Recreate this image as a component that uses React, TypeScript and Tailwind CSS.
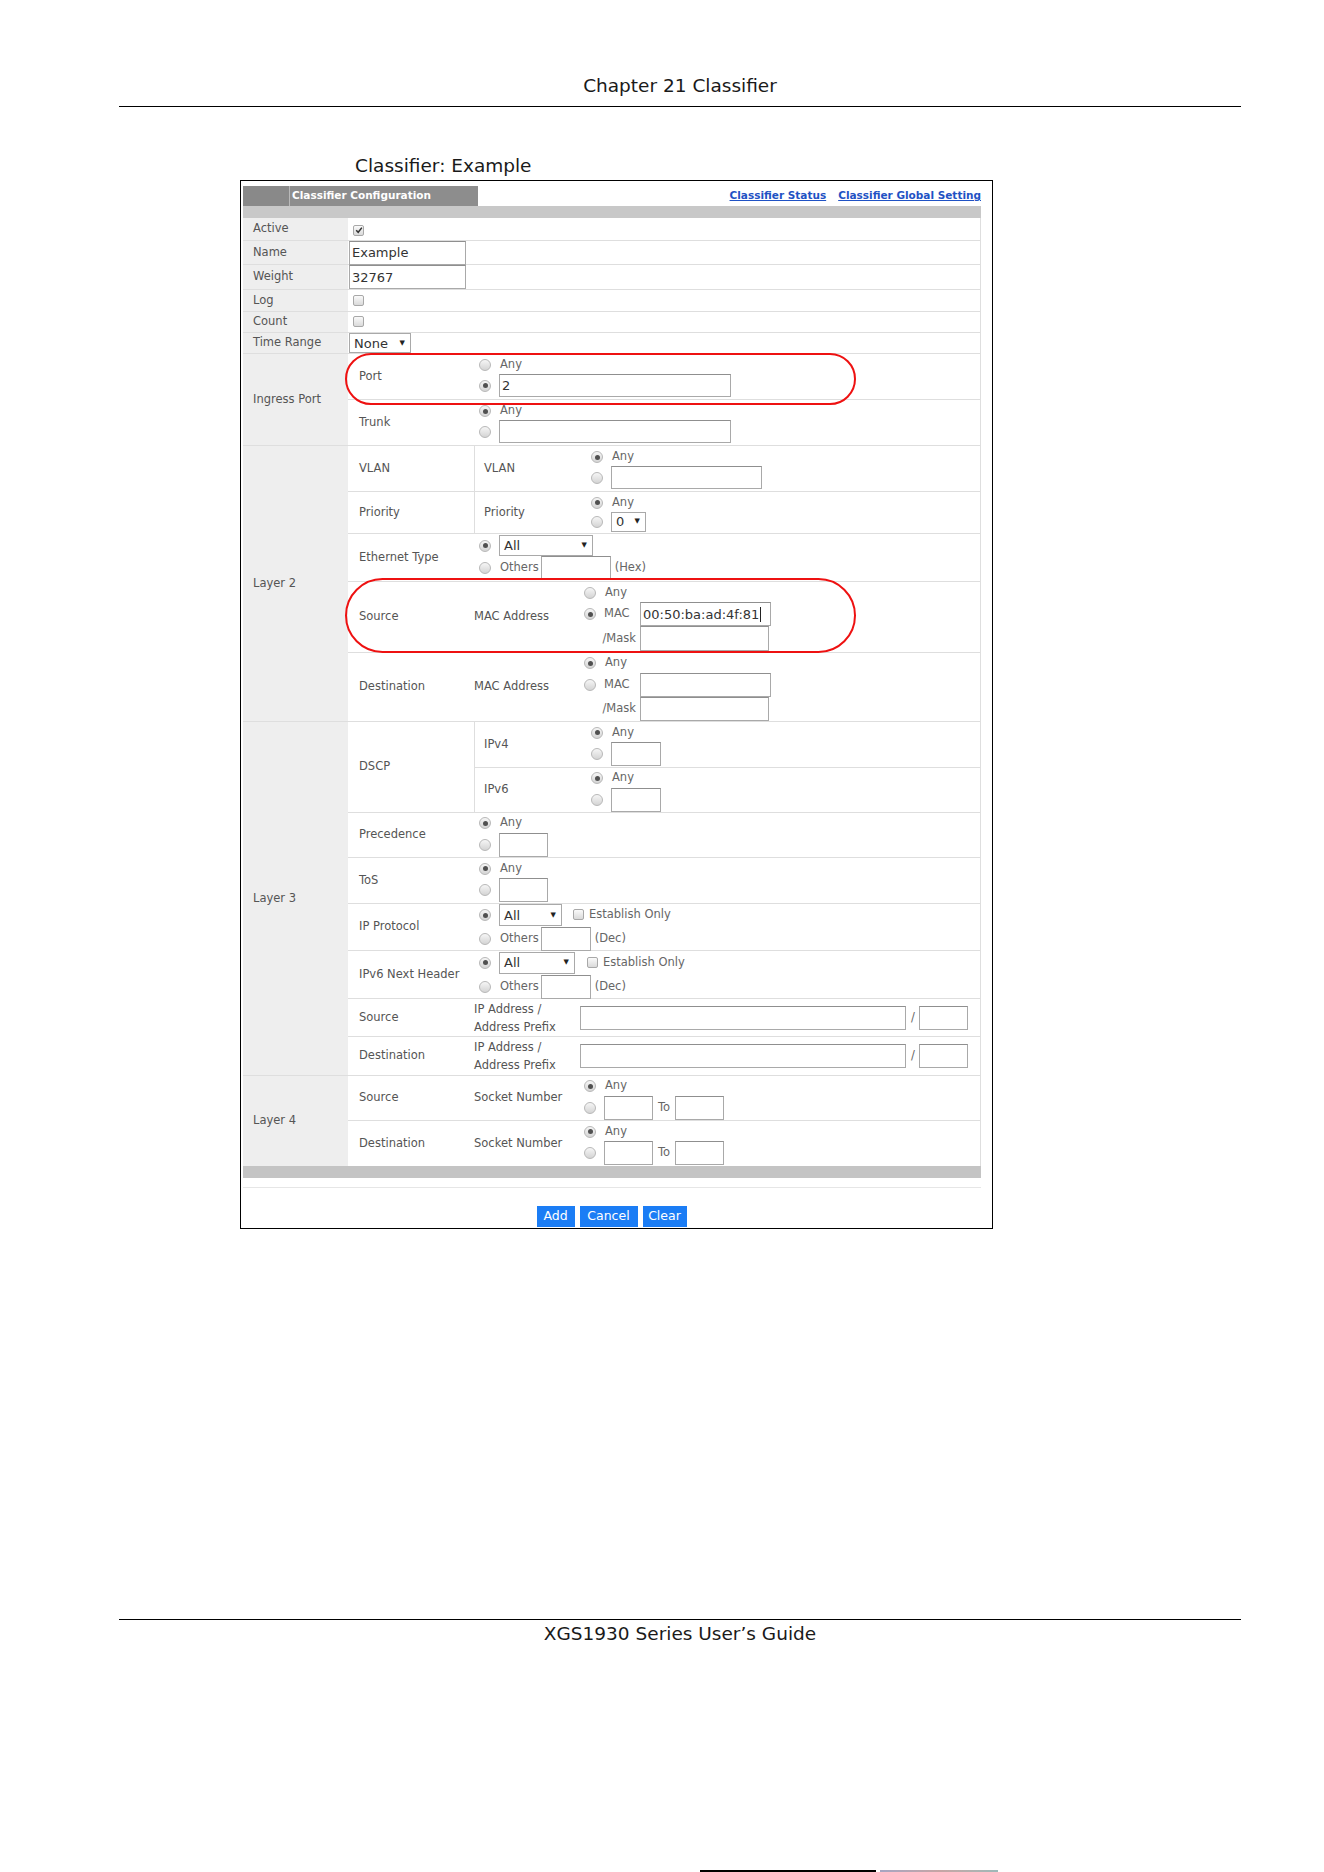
import React from "react";

const FONT = "font-['DejaVu_Sans',sans-serif]";

function Radio({ on }: { on?: boolean }) {
  return (
    <span className="inline-flex h-[12px] w-[12px] shrink-0 items-center justify-center rounded-full border border-[#b8b8b8] bg-gradient-to-b from-[#f6f6f6] to-[#d4d4d4]">
      {on && <span className="h-[5px] w-[5px] rounded-full bg-[#505050]" />}
    </span>
  );
}

function Check({ on }: { on?: boolean }) {
  return (
    <span className="inline-flex h-[11px] w-[11px] shrink-0 items-center justify-center rounded-[2px] border border-[#a8a8a8] bg-gradient-to-b from-[#fafafa] to-[#dadada]">
      {on && (
        <svg viewBox="0 0 10 10" className="h-[8px] w-[8px]">
          <path d="M1.5 5.2 L4 7.8 L8.6 2" stroke="#333" strokeWidth="1.9" fill="none" />
        </svg>
      )}
    </span>
  );
}

function Box({ className, children }: { className: string; children?: React.ReactNode }) {
  return (
    <span
      className={
        "flex shrink-0 items-center border border-[#a9a9a9] border-t-[#8f8f8f] bg-white px-[2px] text-[13px] leading-none text-[#333] " +
        className
      }
    >
      {children}
    </span>
  );
}

function Sel({ className, value }: { className: string; value: string }) {
  return (
    <span
      className={
        "flex shrink-0 items-center justify-between border border-[#a9a9a9] bg-white pl-[4px] pr-[5px] text-[13px] leading-none text-[#333] " +
        className
      }
    >
      <span>{value}</span>
      <span className="text-[7px] text-[#222]">▼</span>
    </span>
  );
}

function Line({ className, children }: { className?: string; children: React.ReactNode }) {
  return <div className={"flex items-center " + (className ?? "")}>{children}</div>;
}

function Label({ children }: { children: React.ReactNode }) {
  return (
    <div className="flex w-[105px] shrink-0 items-center bg-[#eeeeee] pl-[10px] text-[11.5px] text-[#555]">
      {children}
    </div>
  );
}

function SimpleRow({ label, h, children }: { label: string; h: string; children?: React.ReactNode }) {
  return (
    <div className={"flex border-b border-[#dedede] " + h}>
      <Label>{label}</Label>
      <div className="flex flex-1 items-center">{children}</div>
    </div>
  );
}

function Group({ label, children }: { label: string; children: React.ReactNode }) {
  return (
    <div className="flex border-b border-[#dedede]">
      <Label>{label}</Label>
      <div className="flex flex-1 flex-col">{children}</div>
    </div>
  );
}

function Sub({ h, last, children }: { h: string; last?: boolean; children: React.ReactNode }) {
  return <div className={"flex " + h + (last ? "" : " border-b border-[#dedede]")}>{children}</div>;
}

function C2({ w, children, divider }: { w: string; children?: React.ReactNode; divider?: boolean }) {
  return (
    <div
      className={
        "flex shrink-0 items-center pl-[11px] text-[11.5px] text-[#555] " +
        w +
        (divider ? " border-r border-[#dedede]" : "")
      }
    >
      {children}
    </div>
  );
}

const opt = "text-[11.5px] text-[#666]";

function SocketRow({ label, last }: { label: string; last?: boolean }) {
  return (
    <Sub h="h-[45px]" last={last}>
      <C2 w="w-[126px]">{label}</C2>
      <div className="flex w-[110px] shrink-0 items-center text-[11.5px] text-[#555]">Socket Number</div>
      <div className="flex flex-col justify-center">
        <Line className="h-[19px]">
          <Radio on />
          <span className={"ml-[9px] " + opt}>Any</span>
        </Line>
        <Line>
          <Radio />
          <Box className="ml-[8px] h-[24px] w-[49px]" />
          <span className={"ml-[5px] " + opt}>To</span>
          <Box className="ml-[5px] h-[24px] w-[49px]" />
        </Line>
      </div>
    </Sub>
  );
}

function IpRow({ label, last }: { label: string; last?: boolean }) {
  return (
    <Sub h="h-[38px]" last={last}>
      <C2 w="w-[126px]">{label}</C2>
      <div className="flex w-[106px] shrink-0 flex-col justify-center text-[11.5px] leading-[18px] text-[#555]">
        <span>IP Address /</span>
        <span>Address Prefix</span>
      </div>
      <Line>
        <Box className="h-[24px] w-[326px]" />
        <span className={"ml-[5px] " + opt}>/</span>
        <Box className="ml-[4px] h-[24px] w-[49px]" />
      </Line>
    </Sub>
  );
}

export default function App() {
  return (
    <div className={"relative h-[1872px] w-[1324px] overflow-hidden bg-white " + FONT}>
      {/* page header */}
      <div className="ml-[119px] h-[107px] w-[1122px] border-b-[1.5px] border-black pt-[75px] text-center text-[18.5px] leading-[22px] text-[#1a1a1a]">
        Chapter 21 Classifier
      </div>

      <div className="ml-[355px] mt-[48px] text-[18.5px] leading-[22px] text-[#1a1a1a]">Classifier: Example</div>

      {/* screenshot box */}
      <div className="relative ml-[240px] mt-[3px] h-[1049px] w-[753px] border border-black pl-[2px] pr-[11px] pt-[5px]">
        {/* tab + links */}
        <div className="flex h-[20px] items-stretch justify-between">
          <div className="flex w-[235px] bg-[#8d8d8d]">
            <div className="w-[47px] border-r border-[#b9b9b9] bg-[#898989]" />
            <div className="flex items-center pl-[2px] text-[10.5px] font-bold text-white">Classifier Configuration</div>
          </div>
          <div className="flex items-start gap-[12px] pt-[2px] text-[10.5px] font-bold text-[#1f52c4]">
            <span className="underline">Classifier Status</span>
            <span className="underline">Classifier Global Setting</span>
          </div>
        </div>
        <div className="h-[12px] bg-[#c8c8c8]" />

        <div className="border-r border-[#dedede]">
          <SimpleRow label="Active" h="h-[23px]">
            <span className="ml-[5px]">
              <Check on />
            </span>
          </SimpleRow>
          <SimpleRow label="Name" h="h-[24px]">
            <Box className="ml-[1px] h-[24px] w-[117px]">Example</Box>
          </SimpleRow>
          <SimpleRow label="Weight" h="h-[25px]">
            <Box className="ml-[1px] h-[24px] w-[117px]">32767</Box>
          </SimpleRow>
          <SimpleRow label="Log" h="h-[22px]">
            <span className="ml-[5px]">
              <Check />
            </span>
          </SimpleRow>
          <SimpleRow label="Count" h="h-[21px]">
            <span className="ml-[5px]">
              <Check />
            </span>
          </SimpleRow>
          <SimpleRow label="Time Range" h="h-[21px]">
            <Sel className="ml-[1px] h-[20px] w-[62px]" value="None" />
          </SimpleRow>

          {/* Ingress Port */}
          <Group label="Ingress Port">
            <Sub h="h-[46px]">
              <C2 w="w-[131px]">Port</C2>
              <div className="flex flex-col justify-center">
                <Line className="h-[18px]">
                  <Radio />
                  <span className={"ml-[9px] " + opt}>Any</span>
                </Line>
                <Line>
                  <Radio on />
                  <Box className="ml-[8px] h-[23px] w-[232px]">2</Box>
                </Line>
              </div>
            </Sub>
            <Sub h="h-[45px]" last>
              <C2 w="w-[131px]">Trunk</C2>
              <div className="flex flex-col justify-center">
                <Line className="h-[18px]">
                  <Radio on />
                  <span className={"ml-[9px] " + opt}>Any</span>
                </Line>
                <Line>
                  <Radio />
                  <Box className="ml-[8px] h-[23px] w-[232px]" />
                </Line>
              </div>
            </Sub>
          </Group>

          {/* Layer 2 */}
          <Group label="Layer 2">
            <Sub h="h-[46px]">
              <C2 w="w-[127px]" divider>
                VLAN
              </C2>
              <C2 w="w-[116px]">
                <span className="-ml-[2px]">VLAN</span>
              </C2>
              <div className="flex flex-col justify-center">
                <Line className="h-[18px]">
                  <Radio on />
                  <span className={"ml-[9px] " + opt}>Any</span>
                </Line>
                <Line>
                  <Radio />
                  <Box className="ml-[8px] h-[23px] w-[151px]" />
                </Line>
              </div>
            </Sub>
            <Sub h="h-[42px]">
              <C2 w="w-[127px]" divider>
                Priority
              </C2>
              <C2 w="w-[116px]">
                <span className="-ml-[2px]">Priority</span>
              </C2>
              <div className="flex flex-col justify-center">
                <Line className="h-[18px]">
                  <Radio on />
                  <span className={"ml-[9px] " + opt}>Any</span>
                </Line>
                <Line>
                  <Radio />
                  <Sel className="ml-[8px] h-[20px] w-[35px]" value="0" />
                </Line>
              </div>
            </Sub>
            <Sub h="h-[48px]">
              <C2 w="w-[131px]">Ethernet Type</C2>
              <div className="flex flex-col justify-center">
                <Line>
                  <Radio on />
                  <Sel className="ml-[8px] h-[21px] w-[94px]" value="All" />
                </Line>
                <Line>
                  <Radio />
                  <span className={"ml-[9px] " + opt}>Others</span>
                  <Box className="ml-[2px] h-[24px] w-[70px]" />
                  <span className={"ml-[4px] " + opt}>(Hex)</span>
                </Line>
              </div>
            </Sub>
            <Sub h="h-[71px]">
              <C2 w="w-[126px]">Source</C2>
              <div className="flex w-[110px] shrink-0 items-center text-[11.5px] text-[#555]">MAC Address</div>
              <div className="flex flex-col justify-center">
                <Line className="h-[19px]">
                  <Radio />
                  <span className={"ml-[9px] " + opt}>Any</span>
                </Line>
                <Line>
                  <Radio on />
                  <span className={"ml-[8px] w-[33px] " + opt}>MAC</span>
                  <Box className="ml-[3px] h-[24px] w-[131px] border-[#5b93d8] border-t-[#5b93d8]">
                    00:50:ba:ad:4f:81<span className="ml-[1px] h-[15px] w-[1px] bg-[#222]" />
                  </Box>
                </Line>
                <Line>
                  <span className={"w-[52px] text-right " + opt}>/Mask</span>
                  <Box className="ml-[4px] h-[25px] w-[129px]" />
                </Line>
              </div>
            </Sub>
            <Sub h="h-[68px]" last>
              <C2 w="w-[126px]">Destination</C2>
              <div className="flex w-[110px] shrink-0 items-center text-[11.5px] text-[#555]">MAC Address</div>
              <div className="flex flex-col justify-center">
                <Line className="h-[19px]">
                  <Radio on />
                  <span className={"ml-[9px] " + opt}>Any</span>
                </Line>
                <Line>
                  <Radio />
                  <span className={"ml-[8px] w-[33px] " + opt}>MAC</span>
                  <Box className="ml-[3px] h-[24px] w-[131px]" />
                </Line>
                <Line>
                  <span className={"w-[52px] text-right " + opt}>/Mask</span>
                  <Box className="ml-[4px] h-[24px] w-[129px]" />
                </Line>
              </div>
            </Sub>
          </Group>

          {/* Layer 3 */}
          <Group label="Layer 3">
            <Sub h="h-[91px]">
              <C2 w="w-[127px]" divider>
                DSCP
              </C2>
              <div className="flex flex-1 flex-col">
                <div className="flex h-[46px] border-b border-[#dedede]">
                  <C2 w="w-[116px]">
                    <span className="-ml-[2px]">IPv4</span>
                  </C2>
                  <div className="flex flex-col justify-center">
                    <Line className="h-[19px]">
                      <Radio on />
                      <span className={"ml-[9px] " + opt}>Any</span>
                    </Line>
                    <Line>
                      <Radio />
                      <Box className="ml-[8px] h-[24px] w-[50px]" />
                    </Line>
                  </div>
                </div>
                <div className="flex h-[44px]">
                  <C2 w="w-[116px]">
                    <span className="-ml-[2px]">IPv6</span>
                  </C2>
                  <div className="flex flex-col justify-center">
                    <Line className="h-[19px]">
                      <Radio on />
                      <span className={"ml-[9px] " + opt}>Any</span>
                    </Line>
                    <Line>
                      <Radio />
                      <Box className="ml-[8px] h-[24px] w-[50px]" />
                    </Line>
                  </div>
                </div>
              </div>
            </Sub>
            <Sub h="h-[45px]">
              <C2 w="w-[131px]">Precedence</C2>
              <div className="flex flex-col justify-center">
                <Line className="h-[19px]">
                  <Radio on />
                  <span className={"ml-[9px] " + opt}>Any</span>
                </Line>
                <Line>
                  <Radio />
                  <Box className="ml-[8px] h-[24px] w-[49px]" />
                </Line>
              </div>
            </Sub>
            <Sub h="h-[46px]">
              <C2 w="w-[131px]">ToS</C2>
              <div className="flex flex-col justify-center">
                <Line className="h-[19px]">
                  <Radio on />
                  <span className={"ml-[9px] " + opt}>Any</span>
                </Line>
                <Line>
                  <Radio />
                  <Box className="ml-[8px] h-[24px] w-[49px]" />
                </Line>
              </div>
            </Sub>
            <Sub h="h-[47px]">
              <C2 w="w-[131px]">IP Protocol</C2>
              <div className="flex flex-col justify-center">
                <Line>
                  <Radio on />
                  <Sel className="ml-[8px] h-[22px] w-[63px]" value="All" />
                  <span className="ml-[11px]">
                    <Check />
                  </span>
                  <span className={"ml-[5px] " + opt}>Establish Only</span>
                </Line>
                <Line>
                  <Radio />
                  <span className={"ml-[9px] " + opt}>Others</span>
                  <Box className="ml-[2px] h-[24px] w-[50px]" />
                  <span className={"ml-[4px] " + opt}>(Dec)</span>
                </Line>
              </div>
            </Sub>
            <Sub h="h-[48px]">
              <C2 w="w-[131px]">IPv6 Next Header</C2>
              <div className="flex flex-col justify-center">
                <Line>
                  <Radio on />
                  <Sel className="ml-[8px] h-[22px] w-[76px]" value="All" />
                  <span className="ml-[12px]">
                    <Check />
                  </span>
                  <span className={"ml-[5px] " + opt}>Establish Only</span>
                </Line>
                <Line>
                  <Radio />
                  <span className={"ml-[9px] " + opt}>Others</span>
                  <Box className="ml-[2px] h-[24px] w-[50px]" />
                  <span className={"ml-[4px] " + opt}>(Dec)</span>
                </Line>
              </div>
            </Sub>
            <IpRow label="Source" />
            <IpRow label="Destination" last />
          </Group>

          {/* Layer 4 */}
          <div className="flex">
            <Label>Layer 4</Label>
            <div className="flex flex-1 flex-col">
              <SocketRow label="Source" />
              <SocketRow label="Destination" last />
            </div>
          </div>
        </div>
        <div className="h-[12px] bg-[#c4c4c4]" />
        <div className="mt-[9px] h-[1px] bg-[#e6e6e6]" />

        {/* buttons */}
        <div className="mt-[18px] flex justify-center gap-[5px] pr-[1px] text-[12.5px] leading-none text-white">
          <span className="flex h-[21px] w-[38px] items-center justify-center bg-[#1b7df5]">Add</span>
          <span className="flex h-[21px] w-[58px] items-center justify-center bg-[#1b7df5]">Cancel</span>
          <span className="flex h-[21px] w-[44px] items-center justify-center bg-[#1b7df5]">Clear</span>
        </div>

        {/* red highlight ellipses */}
        <div className="pointer-events-none absolute left-[104px] top-[172px] h-[52px] w-[511px] rounded-full border-2 border-[#ee1111]" />
        <div className="pointer-events-none absolute left-[104px] top-[397px] h-[75px] w-[511px] rounded-full border-2 border-[#ee1111]" />
      </div>

      {/* page footer */}
      <div className="ml-[119px] mt-[390px] w-[1122px] border-t-[1.5px] border-black pt-[3px] text-center text-[18.5px] leading-[22px] text-[#1a1a1a]">
        XGS1930 Series User’s Guide
      </div>

      <div className="absolute left-[700px] top-[1870px] h-[2px] w-[176px] bg-black" />
      <div className="absolute left-[880px] top-[1870px] h-[2px] w-[118px] bg-gradient-to-r from-[#6a6a9a] via-[#a06868] to-[#5a8a8a] opacity-60" />
    </div>
  );
}
